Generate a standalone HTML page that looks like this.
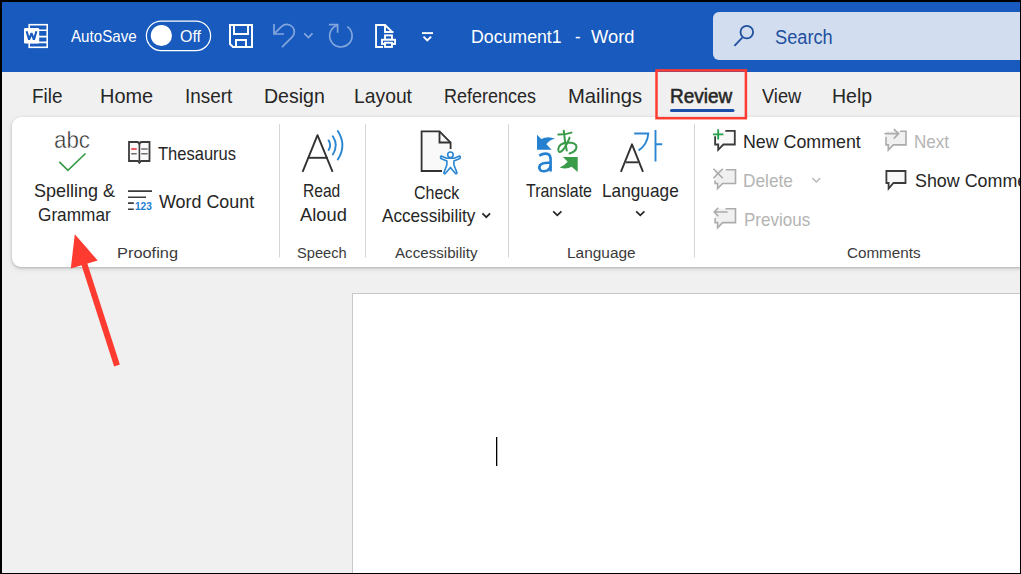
<!DOCTYPE html>
<html><head><meta charset="utf-8">
<style>
html,body{margin:0;padding:0;}
body{width:1021px;height:574px;position:relative;overflow:hidden;background:#000;font-family:"Liberation Sans",sans-serif;}
.abs{position:absolute;}
.t{position:absolute;white-space:nowrap;line-height:1;transform-origin:0 0;}
#title{left:2px;top:2px;width:1018px;height:70px;background:#185abd;}
#tabs{left:2px;top:72px;width:1018px;height:501px;background:#f0f0f0;}
#ribbon{left:12px;top:117px;width:1050px;height:150px;background:#fff;border-radius:9px;box-shadow:0 1px 3px rgba(0,0,0,0.22),0 2px 6px rgba(0,0,0,0.08);}
#page{left:352px;top:293px;width:700px;height:400px;background:#fff;border:1px solid #c8c8c8;}
#search{left:713px;top:12px;width:320px;height:48px;background:#d2ddef;border-radius:6px;}
#clip{left:2px;top:2px;width:1018px;height:571px;overflow:hidden;}
#inner{position:absolute;left:-2px;top:-2px;width:1021px;height:574px;}
svg{position:absolute;left:0;top:0;overflow:visible;}
</style></head><body>
<div id="clip" class="abs"><div id="inner">
<div id="title" class="abs"></div>
<div id="tabs" class="abs"></div>
<div id="search" class="abs"></div>
<div id="ribbon" class="abs"></div>
<div id="page" class="abs"></div>
<svg width="1021" height="574" viewBox="0 0 1021 574">
 <!-- top inner highlight -->
 <!-- Word logo -->
 <g fill="none" stroke="#fff" stroke-width="1.6">
  <rect x="29.2" y="24.7" width="18" height="22.6"/>
  <path d="M29 30.3H47 M29 36.6H47 M29 42.4H47"/>
 </g>
 <rect x="24" y="28" width="15.2" height="15.5" rx="1.2" fill="#fff"/>
 <path d="M26.6 31.2L29.1 39.6L31.5 33.2L33.9 39.6L36.4 31.2" fill="none" stroke="#185abd" stroke-width="2.1" stroke-linejoin="bevel"/>
 <!-- toggle -->
 <rect x="146.4" y="21.1" width="64.2" height="29.5" rx="14.75" fill="none" stroke="#fff" stroke-width="1.25"/>
 <circle cx="161.4" cy="35.5" r="10.6" fill="#fff"/>
 <!-- save -->
 <g fill="none" stroke="#fff" stroke-width="2">
  <path d="M230 25H252V47H233L230 44Z"/>
  <path d="M234 25V34H248V25"/>
  <path d="M236 47V40H246V47"/>
 </g>
 <!-- undo / redo -->
 <g fill="none" stroke="#84a6de" stroke-width="1.7">
  <path d="M274 24V34H284"/>
  <path d="M274.6 33.4L281.7 26.3A7.5 7.5 0 0 1 292.3 36.9L282 47.2"/>
  <path d="M304.2 33.4L308.4 37.5L312.5 33.4"/>
  <path d="M328.9 24.7H337.6V32.8"/>
  <path d="M337.2 25.2A11.2 11.2 0 1 0 347.3 26.6"/>
 </g>
 <!-- print preview -->
 <g fill="#185abd" stroke="#fff" stroke-width="1.9">
  <path d="M383 46.95H376.05V25.05H385L392.95 32.6" fill="none"/>
  <path d="M385 24.5V32.05H393.4" fill="none"/>
  <rect x="385.05" y="35.35" width="6.9" height="4.4"/>
  <rect x="382.05" y="39.75" width="13" height="4.2"/>
  <rect x="385.05" y="42.75" width="6.9" height="4.2"/>
 </g>
 <!-- customize -->
 <path d="M422 33.1H433" stroke="#fff" stroke-width="1.9"/>
 <path d="M423.5 36.6L427.3 40.4L431.1 36.6" fill="none" stroke="#fff" stroke-width="1.9"/>
 <!-- search icon -->
 <g fill="none" stroke="#21509f" stroke-width="1.8">
  <circle cx="746.8" cy="32.1" r="6.3"/>
  <path d="M742.3 37.6L734.4 45.9"/>
 </g>
 <!-- red highlight box -->
 <rect x="656.5" y="70.4" width="89.4" height="47.8" fill="none" stroke="#fe3b30" stroke-width="2.5"/>
 <!-- review underline -->
 <path d="M671.5 110.5H733" stroke="#1b4faa" stroke-width="3" stroke-linecap="round"/>
 <!-- separators -->
 <g stroke="#d6d6d6" stroke-width="1">
  <path d="M279.5 124V257.5 M365.5 124V257.5 M508.5 124V257.5 M694.5 124V257.5"/>
 </g>
 <!-- spelling check -->
 <path d="M59.3 161.8L67.9 170.4L85.5 153.5" fill="none" stroke="#3a9b49" stroke-width="1.7"/>
 <!-- thesaurus book -->
 <path d="M129 142H137Q139.4 142.3 139.4 144.5Q139.4 142.3 141.8 142H149.5V161H141L139.4 162.8L137.8 161H129Z" fill="#fafafa" stroke="#3b3b3b" stroke-width="1.8"/>
 <path d="M139.4 144V161" stroke="#3b3b3b" stroke-width="1.6"/>
 <path d="M131.2 149H136.7" stroke="#e5363a" stroke-width="1.6"/>
 <path d="M131.2 153.7H136.7 M141.2 149H147.7 M141.2 153.7H147.7" stroke="#6e6e6e" stroke-width="1.6"/>
 <!-- word count -->
 <path d="M128 191.1H152 M128 197.2H146 M128 203.1H133.8 M128 209.2H133.8" stroke="#3b3b3b" stroke-width="1.6"/>
 <text x="134.9" y="210" font-family="Liberation Sans" font-size="11.8" font-weight="700" fill="#2680d0" textLength="16.9" lengthAdjust="spacingAndGlyphs">123</text>
 <!-- read aloud -->
 <g fill="none" stroke="#323232" stroke-width="1.9" stroke-linejoin="round">
  <path d="M302.6 171.8L317.5 135.2L332.6 171.8"/>
  <path d="M307.8 157.8H327.6"/>
 </g>
 <g fill="none" stroke="#2a86d2" stroke-width="1.9" stroke-linecap="round">
  <path d="M328.6 140.4Q331.8 145.2 328.6 150"/>
  <path d="M332.8 136.3Q338.8 145.3 332.8 154.4"/>
  <path d="M337.8 131Q347 145.3 337.8 159.5"/>
 </g>
 <!-- check accessibility -->
 <path d="M421.5 131.3H439.5L451 142.8V171H421.5Z" fill="#f9f9f9" stroke="none"/>
 <g fill="none" stroke="#323232" stroke-width="1.8">
  <path d="M442 171H421.6V131.3H439.5L450.6 142.5V149"/>
  <path d="M439.5 131.3V142.5H450.6"/>
 </g>
 <g fill="#fff" stroke="#2a86d2" stroke-width="1.6" stroke-linejoin="round">
  <path d="M441.2 155.9Q440 156.6 440.9 158.4L446.9 161.1V164.8L443.9 172.6Q443.7 173.8 445.1 173.8L450.4 167.4L455.7 173.8Q457.1 173.8 456.9 172.6L453.9 164.8V161.1L459.9 158.4Q460.8 156.6 459.6 155.9L454.2 158.2H446.6Z"/>
  <circle cx="450.45" cy="154.7" r="2.75"/>
 </g>
 <path d="M482.4 213.4L486.3 217.2L490.1 213.4" fill="none" stroke="#262626" stroke-width="1.7"/>
 <!-- translate -->
 <path d="M537 134.8L541.2 139Q548 135.6 555 138.8Q549.2 140.2 546.4 144.2L551.6 149.8H537Z" fill="#2680d0"/>
 <g fill="none" stroke="#2680d0" stroke-width="2.6">
  <path d="M539.3 155.6Q544.5 152.4 548.6 154.3Q550.6 155.6 550.6 159.5V171.6"/>
  <path d="M550.6 162.8Q542.5 162.2 540 165.2Q538.3 168.5 540.8 170.6Q544 172 547.5 170.3Q550 168.6 550.6 166"/>
 </g>
 <g fill="none" stroke="#3a9b49" stroke-width="2" stroke-linecap="round">
  <path d="M558.3 134.6Q564.5 134.8 571.5 132.6"/>
  <path d="M563.8 130.8Q564.6 141 566.8 150.6"/>
  <path d="M569.6 137.6Q566 147.4 561.6 151.2Q558.6 153.2 558.2 149.5Q558.5 143.5 567.5 142.6Q576.5 142.5 576.5 147.2Q576 152 569.5 153.4"/>
 </g>
 <path d="M577.7 171.9V157H562.9L567.7 161.8Q564 166 559.7 167.5Q566.5 169.6 571.6 166.8Z" fill="#3a9b49"/>
 <path d="M553.2 211.3L557.3 215.4L561.4 211.3" fill="none" stroke="#262626" stroke-width="1.7"/>
 <!-- language -->
 <g fill="none" stroke="#323232" stroke-width="1.9" stroke-linejoin="round">
  <path d="M620.9 171.8L632 144.3L643 171.8"/>
  <path d="M625.8 162.3H638.4"/>
 </g>
 <g fill="none" stroke="#2a86d2" stroke-width="1.9">
  <path d="M634.2 133.5H648.3Q647.5 144.5 638.6 150.4"/>
  <path d="M655.5 130V161.4 M655.5 144.2H662.2"/>
 </g>
 <path d="M636.2 211.3L640.3 215.4L644.4 211.3" fill="none" stroke="#262626" stroke-width="1.7"/>
 <!-- new comment -->
 <path d="M715.1 130.9H734.8V144.5H723.4L718.2 149.8V144.5H715.1Z" fill="#f8f8f8"/>
 <path d="M725.3 130.9H734.8V144.5H723.4L718.2 149.8V144.5H715.1V136.2" fill="none" stroke="#3b3b3b" stroke-width="1.8"/>
 <path d="M718.2 129.3V139.6 M713 134.4H723.4" stroke="#22a04a" stroke-width="1.8"/>
 <!-- delete -->
 <path d="M715.1 169.7H735.5V183.5H722.6L717.6 188.6V183.5H715.1Z" fill="#f0f0f0"/>
 <g fill="none" stroke="#ababab" stroke-width="1.6">
  <path d="M725.8 169.7H735.5V183.5H722.6L717.6 188.6V183.5H715.1V180.4"/>
  <path d="M713.4 168.8L722.8 178.2 M722.8 168.8L713.4 178.2"/>
 </g>
 <path d="M812.3 178L816.3 182L820.3 178" fill="none" stroke="#b8b8b8" stroke-width="1.4"/>
 <!-- previous -->
 <path d="M715.1 208.8H735.5V222.6H722.6L717.6 227.8V222.6H715.1Z" fill="#f0f0f0"/>
 <g fill="none" stroke="#ababab" stroke-width="1.6">
  <path d="M725.5 208.8H735.5V222.6H722.6L717.6 227.8V222.6H715.1V217.9"/>
  <path d="M727.6 212H714.2 M718.4 207.8L714.2 212L718.4 216.2"/>
 </g>
 <!-- next -->
 <path d="M886 131.3H906V144.9H893.3L888.3 150V144.9H886Z" fill="#f0f0f0"/>
 <g fill="none" stroke="#ababab" stroke-width="1.6">
  <path d="M900 131.3H906V144.9H893.3L888.3 150V144.9H886V136.8"/>
  <path d="M884.4 133.6H898.6 M893.8 129.2L898.6 133.6L893.8 138.6"/>
 </g>
 <!-- show comments -->
 <path d="M886.4 171H905.5V183H893.5L888.6 188.6V183H886.4Z" fill="#f8f8f8" stroke="#3b3b3b" stroke-width="1.8"/>
 <!-- cursor -->
 <rect x="496" y="437" width="1.3" height="29" fill="#000"/>
 <!-- red arrow -->
 <path d="M117 365.5L84 263" stroke="#fe3b30" stroke-width="6"/>
 <path d="M74.8 234.3L70.8 268.4L97.7 260.5Z" fill="#fe3b30"/>
</svg>
<span class="t" style="left:71.00px;top:29.11px;font-size:15.7px;color:#ffffff;font-weight:400;transform:scaleX(0.9663);-webkit-text-stroke:0px #185abd;">AutoSave</span>
<span class="t" style="left:179.50px;top:28.10px;font-size:16.4px;color:#ffffff;font-weight:400;transform:scaleX(0.9770);-webkit-text-stroke:0px #185abd;">Off</span>
<span class="t" style="left:471.06px;top:28.11px;font-size:18.9px;color:#ffffff;font-weight:400;transform:scaleX(0.9380);-webkit-text-stroke:0px #185abd;">Document1</span>
<span class="t" style="left:574.80px;top:28.11px;font-size:18.9px;color:#ffffff;font-weight:400;transform:scaleX(0.8833);-webkit-text-stroke:0px #185abd;">-</span>
<span class="t" style="left:591.00px;top:28.11px;font-size:18.9px;color:#ffffff;font-weight:400;transform:scaleX(0.9710);-webkit-text-stroke:0px #185abd;">Word</span>
<span class="t" style="left:774.90px;top:27.11px;font-size:20px;color:#22509e;font-weight:400;transform:scaleX(0.9109);-webkit-text-stroke:0px #d2ddef;">Search</span>
<span class="t" style="left:31.54px;top:87.11px;font-size:19.8px;color:#262626;font-weight:400;transform:scaleX(0.9555);-webkit-text-stroke:0px #f0f0f0;">File</span>
<span class="t" style="left:100.49px;top:87.11px;font-size:19.8px;color:#262626;font-weight:400;transform:scaleX(1.0065);-webkit-text-stroke:0px #f0f0f0;">Home</span>
<span class="t" style="left:184.54px;top:87.11px;font-size:19.8px;color:#262626;font-weight:400;transform:scaleX(0.9556);-webkit-text-stroke:0px #f0f0f0;">Insert</span>
<span class="t" style="left:263.81px;top:87.11px;font-size:19.8px;color:#262626;font-weight:400;transform:scaleX(0.9870);-webkit-text-stroke:0px #f0f0f0;">Design</span>
<span class="t" style="left:353.92px;top:87.11px;font-size:19.8px;color:#262626;font-weight:400;transform:scaleX(0.9763);-webkit-text-stroke:0px #f0f0f0;">Layout</span>
<span class="t" style="left:443.79px;top:87.11px;font-size:19.8px;color:#262626;font-weight:400;transform:scaleX(0.9096);-webkit-text-stroke:0px #f0f0f0;">References</span>
<span class="t" style="left:567.68px;top:87.11px;font-size:19.8px;color:#262626;font-weight:400;transform:scaleX(1.0228);-webkit-text-stroke:0px #f0f0f0;">Mailings</span>
<span class="t" style="left:669.74px;top:87.11px;font-size:19.8px;color:#262626;font-weight:400;transform:scaleX(0.9601);-webkit-text-stroke:0.55px #262626;">Review</span>
<span class="t" style="left:761.70px;top:87.11px;font-size:19.8px;color:#262626;font-weight:400;transform:scaleX(0.9229);-webkit-text-stroke:0px #f0f0f0;">View</span>
<span class="t" style="left:831.91px;top:87.11px;font-size:19.8px;color:#262626;font-weight:400;transform:scaleX(0.9853);-webkit-text-stroke:0px #f0f0f0;">Help</span>
<span class="t" style="left:54.47px;top:128.12px;font-size:24px;color:#2a2a2a;font-weight:400;transform:scaleX(0.9312);-webkit-text-stroke:0.5px #fff;">abc</span>
<span class="t" style="left:33.80px;top:181.10px;font-size:19px;color:#262626;font-weight:400;transform:scaleX(0.9478);-webkit-text-stroke:0px #ffffff;">Spelling &</span>
<span class="t" style="left:37.60px;top:205.10px;font-size:19px;color:#262626;font-weight:400;transform:scaleX(0.9061);-webkit-text-stroke:0px #ffffff;">Grammar</span>
<span class="t" style="left:158.40px;top:144.10px;font-size:19px;color:#262626;font-weight:400;transform:scaleX(0.8693);-webkit-text-stroke:0px #ffffff;">Thesaurus</span>
<span class="t" style="left:158.90px;top:192.10px;font-size:19px;color:#262626;font-weight:400;transform:scaleX(0.9425);-webkit-text-stroke:0px #ffffff;">Word Count</span>
<span class="t" style="left:303.48px;top:181.10px;font-size:19px;color:#262626;font-weight:400;transform:scaleX(0.8209);-webkit-text-stroke:0px #ffffff;">Read</span>
<span class="t" style="left:299.50px;top:205.10px;font-size:19px;color:#262626;font-weight:400;transform:scaleX(0.9640);-webkit-text-stroke:0px #ffffff;">Aloud</span>
<span class="t" style="left:414.40px;top:183.10px;font-size:19px;color:#262626;font-weight:400;transform:scaleX(0.8408);-webkit-text-stroke:0px #ffffff;">Check</span>
<span class="t" style="left:381.90px;top:206.10px;font-size:19px;color:#262626;font-weight:400;transform:scaleX(0.9022);-webkit-text-stroke:0px #ffffff;">Accessibility</span>
<span class="t" style="left:526.30px;top:181.10px;font-size:19px;color:#262626;font-weight:400;transform:scaleX(0.8405);-webkit-text-stroke:0px #ffffff;">Translate</span>
<span class="t" style="left:602.39px;top:181.10px;font-size:19px;color:#262626;font-weight:400;transform:scaleX(0.9076);-webkit-text-stroke:0px #ffffff;">Language</span>
<span class="t" style="left:743.46px;top:132.10px;font-size:19px;color:#262626;font-weight:400;transform:scaleX(0.9373);-webkit-text-stroke:0px #ffffff;">New Comment</span>
<span class="t" style="left:743.49px;top:171.10px;font-size:19px;color:#b4b4b4;font-weight:400;transform:scaleX(0.9090);-webkit-text-stroke:0px #ffffff;">Delete</span>
<span class="t" style="left:743.51px;top:210.10px;font-size:19px;color:#b4b4b4;font-weight:400;transform:scaleX(0.8948);-webkit-text-stroke:0px #ffffff;">Previous</span>
<span class="t" style="left:914.20px;top:132.10px;font-size:19px;color:#b4b4b4;font-weight:400;transform:scaleX(0.8972);-webkit-text-stroke:0px #ffffff;">Next</span>
<span class="t" style="left:914.70px;top:171.10px;font-size:19px;color:#262626;font-weight:400;transform:scaleX(0.9408);-webkit-text-stroke:0px #ffffff;">Show Comments</span>
<span class="t" style="left:117.24px;top:245.11px;font-size:15.5px;color:#3b3b3b;font-weight:400;transform:scaleX(1.0568);-webkit-text-stroke:0px #ffffff;">Proofing</span>
<span class="t" style="left:297.20px;top:245.11px;font-size:15.5px;color:#3b3b3b;font-weight:400;transform:scaleX(0.9451);-webkit-text-stroke:0px #ffffff;">Speech</span>
<span class="t" style="left:395.30px;top:245.11px;font-size:15.5px;color:#3b3b3b;font-weight:400;transform:scaleX(0.9768);-webkit-text-stroke:0px #ffffff;">Accessibility</span>
<span class="t" style="left:566.51px;top:245.11px;font-size:15.5px;color:#3b3b3b;font-weight:400;transform:scaleX(0.9949);-webkit-text-stroke:0px #ffffff;">Language</span>
<span class="t" style="left:846.70px;top:245.11px;font-size:15.5px;color:#3b3b3b;font-weight:400;transform:scaleX(0.9816);-webkit-text-stroke:0px #ffffff;">Comments</span>
</div></div>
</body></html>
